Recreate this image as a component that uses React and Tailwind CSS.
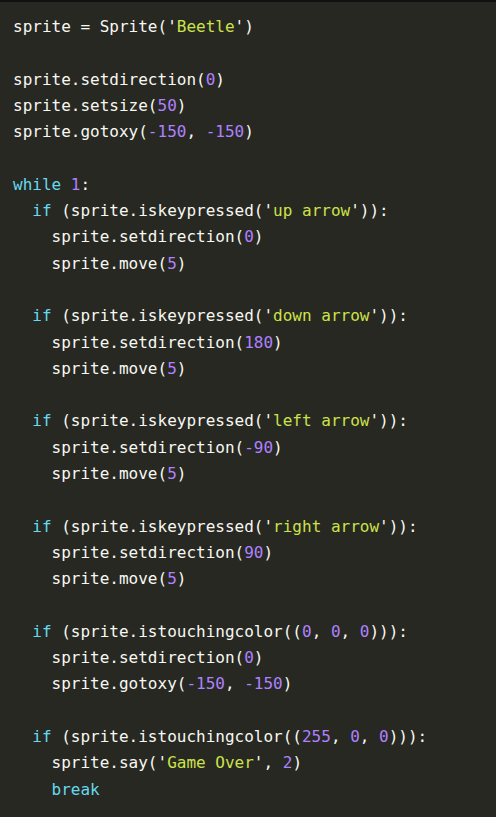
const K = ({ children }) => <span className="text-[#66d9ef]">{children}</span>;
const N = ({ children }) => <span className="text-[#ae81ff]">{children}</span>;
const S = ({ children }) => (
  <>
    '<span className="text-[#cde24a]">{children}</span>'
  </>
);

const lines = [
  <>sprite = Sprite(<S>Beetle</S>)</>,
  null,
  <>sprite.setdirection(<N>0</N>)</>,
  <>sprite.setsize(<N>50</N>)</>,
  <>sprite.gotoxy(<N>-150</N>, <N>-150</N>)</>,
  null,
  <><K>while</K> <N>1</N>:</>,
  <>  <K>if</K> (sprite.iskeypressed(<S>up arrow</S>)):</>,
  <>    sprite.setdirection(<N>0</N>)</>,
  <>    sprite.move(<N>5</N>)</>,
  null,
  <>  <K>if</K> (sprite.iskeypressed(<S>down arrow</S>)):</>,
  <>    sprite.setdirection(<N>180</N>)</>,
  <>    sprite.move(<N>5</N>)</>,
  null,
  <>  <K>if</K> (sprite.iskeypressed(<S>left arrow</S>)):</>,
  <>    sprite.setdirection(<N>-90</N>)</>,
  <>    sprite.move(<N>5</N>)</>,
  null,
  <>  <K>if</K> (sprite.iskeypressed(<S>right arrow</S>)):</>,
  <>    sprite.setdirection(<N>90</N>)</>,
  <>    sprite.move(<N>5</N>)</>,
  null,
  <>  <K>if</K> (sprite.istouchingcolor((<N>0</N>, <N>0</N>, <N>0</N>))):</>,
  <>    sprite.setdirection(<N>0</N>)</>,
  <>    sprite.gotoxy(<N>-150</N>, <N>-150</N>)</>,
  null,
  <>  <K>if</K> (sprite.istouchingcolor((<N>255</N>, <N>0</N>, <N>0</N>))):</>,
  <>    sprite.say(<S>Game Over</S>, <N>2</N>)</>,
  <>    <K>break</K></>,
];

export default function App() {
  return (
    <div className="w-[496px] h-[817px] bg-[#272822] border-t-2 border-[#111111] overflow-hidden">
      <pre className="pt-[12px] pl-[13px] m-0 text-[16px] leading-[26.3px] text-[#f8f8f2] font-['DejaVu_Sans_Mono',monospace] whitespace-pre">
        {lines.map((l, i) => (
          <div key={i} className="h-[26.3px]">{l}</div>
        ))}
      </pre>
    </div>
  );
}
